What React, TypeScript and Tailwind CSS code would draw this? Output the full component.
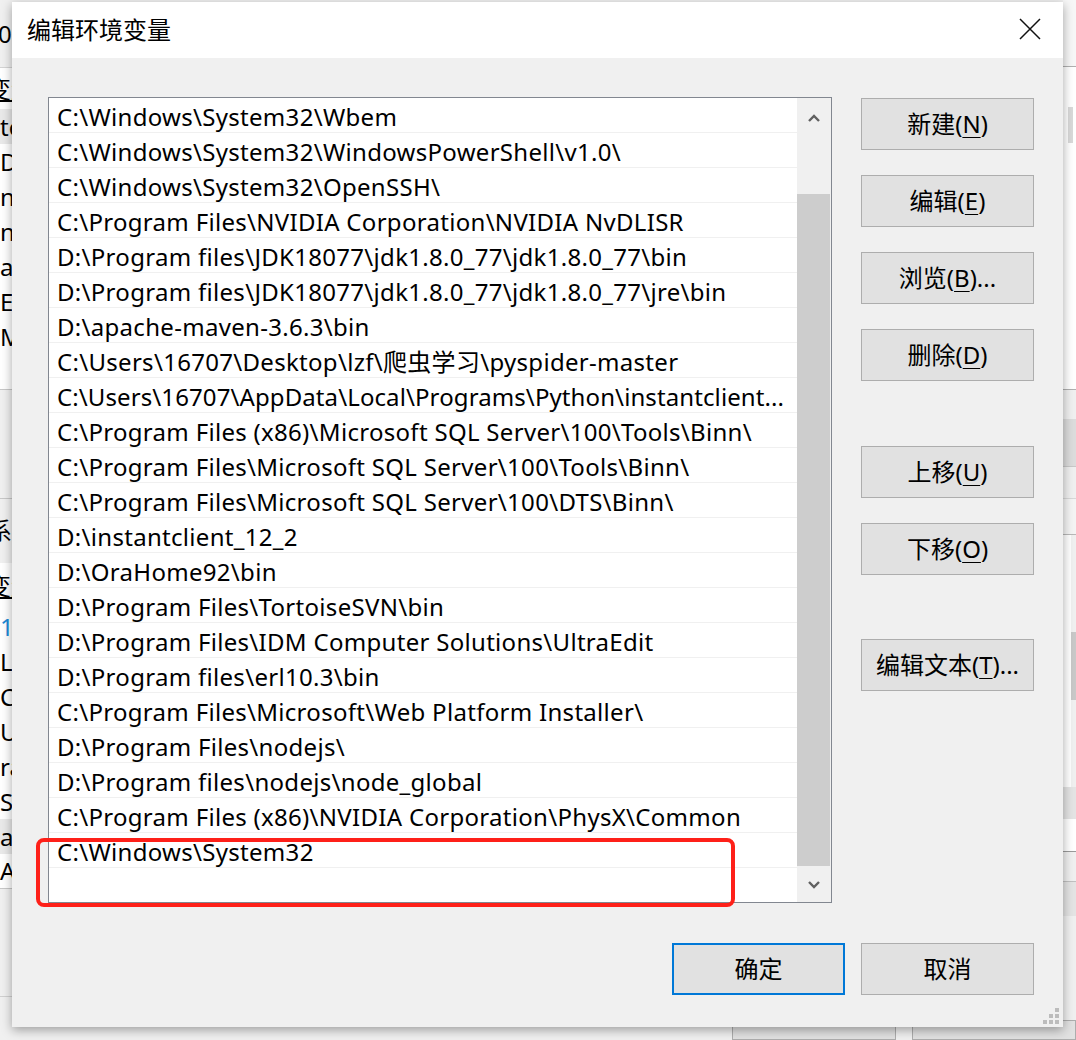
import React from 'react';

const paths: string[] = [
    String.raw`C:\Windows\System32\Wbem`,
    String.raw`C:\Windows\System32\WindowsPowerShell\v1.0\\`.slice(0, -1),
    String.raw`C:\Windows\System32\OpenSSH\\`.slice(0, -1),
    String.raw`C:\Program Files\NVIDIA Corporation\NVIDIA NvDLISR`,
    String.raw`D:\Program files\JDK18077\jdk1.8.0_77\jdk1.8.0_77\bin`,
    String.raw`D:\Program files\JDK18077\jdk1.8.0_77\jdk1.8.0_77\jre\bin`,
    String.raw`D:\apache-maven-3.6.3\bin`,
    String.raw`C:\Users\16707\Desktop\lzf\爬虫学习\pyspider-master`,
    String.raw`C:\Users\16707\AppData\Local\Programs\Python\instantclient...`,
    String.raw`C:\Program Files (x86)\Microsoft SQL Server\100\Tools\Binn\\`.slice(0, -1),
    String.raw`C:\Program Files\Microsoft SQL Server\100\Tools\Binn\\`.slice(0, -1),
    String.raw`C:\Program Files\Microsoft SQL Server\100\DTS\Binn\\`.slice(0, -1),
    String.raw`D:\instantclient_12_2`,
    String.raw`D:\OraHome92\bin`,
    String.raw`D:\Program Files\TortoiseSVN\bin`,
    String.raw`D:\Program Files\IDM Computer Solutions\UltraEdit`,
    String.raw`D:\Program files\erl10.3\bin`,
    String.raw`C:\Program Files\Microsoft\Web Platform Installer\\`.slice(0, -1),
    String.raw`D:\Program Files\nodejs\\`.slice(0, -1),
    String.raw`D:\Program files\nodejs\node_global`,
    String.raw`C:\Program Files (x86)\NVIDIA Corporation\PhysX\Common`,
    String.raw`C:\Windows\System32`,
    '',
];

const Chevron: React.FC<{ down?: boolean }> = ({ down }) => (
    <svg width="12" height="9" viewBox="0 0 12 9">
        <polyline
            points={down ? '1,2 6,7 11,2' : '1,7 6,2 11,7'}
            fill="none"
            stroke="#606060"
            strokeWidth="2.4"
        />
    </svg>
);

const Btn: React.FC<{ children: React.ReactNode; primary?: boolean; className?: string }> = ({ children, primary, className }) => (
    <div
        className={
            'flex items-center justify-center w-[173px] h-[52px] bg-[#e1e1e1] text-[24px] text-black ' +
            (primary ? 'border-2 border-[#0078d7] ' : 'border border-[#adadad] ') +
            (className ?? '')
        }
    >
        {children}
    </div>
);

const Key: React.FC<{ k: string }> = ({ k }) => (
    <span className="underline underline-offset-[4px] decoration-1">{k}</span>
);

const LeftSliver: React.FC = () => (
    <div className="w-[12px] h-full overflow-hidden flex flex-col bg-white text-[24px] leading-none text-black">
        <div className="h-[68px] shrink-0 bg-[#f0f0f0] flex items-center border-b border-[#d4d4d4]">
            <span className="-ml-[2px]">0</span>
        </div>
        <div className="h-[41px] shrink-0 flex items-center">
            <span className="-ml-[13px] underline whitespace-nowrap">变量</span>
        </div>
        <div className="h-[35px] shrink-0 flex items-center bg-[#e9e9e9]">
            <span className="whitespace-nowrap">tem</span>
        </div>
        {['D_', 'n', 'n', 'at', 'EN', 'M', ''].map((t, i) => (
            <div key={i} className="h-[35px] shrink-0 flex items-center">
                <span className="whitespace-nowrap">{t}</span>
            </div>
        ))}
        <div className="h-[110px] shrink-0 bg-[#f0f0f0] border-t border-b border-[#c8c8c8]" />
        <div className="h-[64px] shrink-0 bg-[#f0f0f0] flex items-center">
            <span className="-ml-[12px] whitespace-nowrap">系统</span>
        </div>
        <div className="h-[46px] shrink-0 flex items-center">
            <span className="-ml-[13px] underline whitespace-nowrap">变量</span>
        </div>
        {['12', 'LL', 'C', 'U', 'ra', 'S'].map((t, i) => (
            <div key={i} className="h-[35px] shrink-0 flex items-center">
                <span className={'whitespace-nowrap ' + (i === 0 ? 'text-[#1e8ad6]' : '')}>{t}</span>
            </div>
        ))}
        <div className="h-[35px] shrink-0 flex items-center bg-[#e9e9e9]">
            <span className="whitespace-nowrap">at</span>
        </div>
        <div className="h-[35px] shrink-0 flex items-center border-b border-[#c8c8c8]">
            <span className="whitespace-nowrap">AT</span>
        </div>
        <div className="h-[108px] shrink-0 bg-[#f0f0f0] border-b border-[#d0d0d0]" />
        <div className="flex-1 bg-[#f0f0f0]" />
    </div>
);

const RightSliver: React.FC = () => (
    <div className="w-[13px] h-full overflow-hidden flex flex-col bg-[#fafafa]">
        <div className="h-[67px] shrink-0 bg-[#f7f7f7] border-b border-[#b0b0b0]" />
        <div className="h-[322px] shrink-0 flex flex-col bg-white">
            <div className="mt-[40px] ml-[5px] w-[5px] h-[36px] bg-[#dadada]" />
        </div>
        <div className="h-[30px] shrink-0 bg-[#f0f0f0] border-t border-[#b0b0b0]" />
        <div className="h-[48px] shrink-0 bg-[#dcdcdc] border-b border-[#c8c8c8]" />
        <div className="h-[32px] shrink-0 bg-[#f0f0f0] border-b border-[#d8d8d8]" />
        <div className="h-[36px] shrink-0 bg-[#f4f4f4] border-b border-[#b8b8b8]" />
        <div className="h-[252px] shrink-0 flex bg-white">
            <div className="ml-[8px] w-[5px] flex flex-col bg-[#f0f0f0]">
                <div className="mt-[97px] h-[68px] bg-[#c8c8c8]" />
            </div>
        </div>
        <div className="h-[32px] shrink-0 bg-[#e4e4e4]" />
        <div className="h-[33px] shrink-0 bg-white border-b border-[#9a9a9a]" />
        <div className="h-[30px] shrink-0 bg-[#f0f0f0] border-b border-[#c0c0c0]" />
        <div className="h-[34px] shrink-0 bg-[#e4e4e4]" />
        <div className="flex-1 bg-[#f0f0f0]" />
    </div>
);

export default function App() {
    return (
        <div
            className="relative w-[1076px] h-[1040px] overflow-hidden bg-[#f0f0f0] text-black"
            style={{ fontFamily: '"Noto Sans", "Noto Sans CJK SC", sans-serif' }}
        >
            {/* window behind the dialog */}
            <div className="flex flex-col h-full">
                <div className="h-[1030px] flex justify-between">
                    <LeftSliver />
                    <RightSliver />
                </div>
                <div className="flex-1 flex gap-[16px] pl-[732px] pt-[4px]">
                    <div className="w-[173px] h-[20px] bg-[#e1e1e1] border border-[#adadad]" />
                    <div className="w-[173px] h-[20px] bg-[#e1e1e1] border border-[#adadad]" />
                </div>
            </div>

            {/* dialog */}
            <div className="absolute left-[12px] top-[2px] w-[1051px] h-[1025px] flex flex-col bg-[#f0f0f0] shadow-[0_3px_10px_rgba(0,0,0,0.35)]">
                <div className="h-[56px] shrink-0 bg-white flex items-center justify-between pl-[15px] pr-[22px]">
                    <span className="text-[24px] leading-none -mt-[2px]" style={{ fontFamily: '"Noto Sans CJK SC", sans-serif' }}>
                        编辑环境变量
                    </span>
                    <svg width="22" height="22" viewBox="0 0 22 22" className="-mt-[2px]">
                        <path d="M1 1 L21 21 M21 1 L1 21" stroke="#111" strokeWidth="1.5" />
                    </svg>
                </div>

                <div className="relative flex-1 flex flex-col pl-[36px] pr-[29px] pt-[39px]">
                    <div className="flex items-start gap-[29px]">
                        <div className="w-[784px] h-[806px] border border-[#828790] bg-white flex overflow-hidden">
                            <div className="w-[748px] flex flex-col overflow-hidden">
                                {paths.map((p, i) => (
                                    <div
                                        key={i}
                                        className={
                                            'h-[35px] shrink-0 border-b border-[#f0f0f0] flex items-center pl-[8px] pt-[3px] text-[24px] leading-none whitespace-nowrap overflow-hidden ' +
                                            (i === 8 ? 'tracking-[0.1px]' : 'tracking-[0.3px]')
                                        }
                                    >
                                        {p}
                                    </div>
                                ))}
                            </div>
                            <div className="w-[34px] flex flex-col bg-[#f0f0f0]">
                                <div className="h-[40px] shrink-0 flex items-center justify-center pr-[1px]">
                                    <Chevron />
                                </div>
                                <div className="h-[56px] shrink-0" />
                                <div className="flex-1 w-[33px] bg-[#cdcdcd]" />
                                <div className="h-[36px] shrink-0 flex items-center justify-center pr-[1px]">
                                    <Chevron down />
                                </div>
                            </div>
                        </div>

                        <div className="flex flex-col gap-[25px] mt-[1px]">
                            <Btn>新建(<Key k="N" />)</Btn>
                            <Btn>编辑(<Key k="E" />)</Btn>
                            <Btn>浏览(<Key k="B" />)...</Btn>
                            <Btn>删除(<Key k="D" />)</Btn>
                            <Btn className="mt-[40px]">上移(<Key k="U" />)</Btn>
                            <Btn>下移(<Key k="O" />)</Btn>
                            <Btn className="mt-[39px]">编辑文本(<Key k="T" />)...</Btn>
                        </div>
                    </div>

                    <div className="flex justify-end gap-[16px] mt-[40px]">
                        <Btn primary>确定</Btn>
                        <Btn>取消</Btn>
                    </div>

                    {/* resize grip */}
                    <svg className="absolute right-[4px] bottom-[3px]" width="16" height="16" viewBox="0 0 16 16">
                        <rect x="12" y="0" width="4" height="4" fill="#bcbcbc" />
                        <rect x="6" y="6" width="4" height="4" fill="#bcbcbc" />
                        <rect x="12" y="6" width="4" height="4" fill="#bcbcbc" />
                        <rect x="0" y="12" width="4" height="4" fill="#bcbcbc" />
                        <rect x="6" y="12" width="4" height="4" fill="#bcbcbc" />
                        <rect x="12" y="12" width="4" height="4" fill="#bcbcbc" />
                    </svg>
                </div>
            </div>

            {/* red annotation */}
            <div className="absolute left-[36px] top-[838px] w-[699px] h-[69px] border-[4px] border-[#fe2019] rounded-[8px]" />
        </div>
    );
}
